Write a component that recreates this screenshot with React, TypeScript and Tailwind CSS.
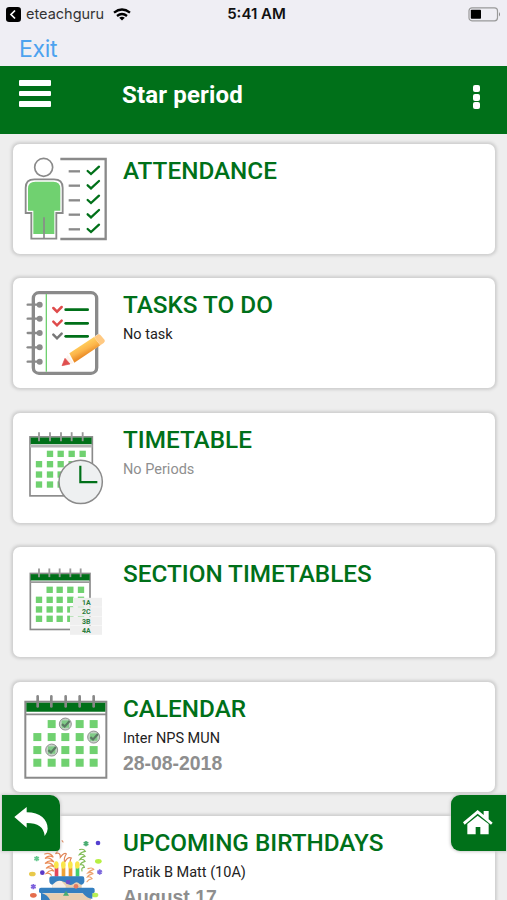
import React from "react";

const GREEN = "#007019";
const LIGHT = "#70d170";
const GREY = "#8a8a8a";

function AttendanceIcon() {
  return (
    <svg viewBox="9 12 330 330" className="size-[110px] shrink-0" fill="none">
      <path d="M151 57H287V297H151" stroke={GREY} strokeWidth="7" />
      <circle cx="101" cy="82" r="27" stroke={GREY} strokeWidth="5" fill="#fff" />
      <path d="M47 219V143Q47 118 73 118H132Q158 118 158 143V219H139V296H64V219Z" fill="#fff" stroke={GREY} strokeWidth="5.5" />
      <path d="M54 212V146Q54 125 76 125H130Q151 125 151 146V212H133V282H70V212Z" fill={LIGHT} />
      <path d="M102 232V296" stroke={GREY} strokeWidth="5" />
      {[94, 137, 181, 224, 268].map((y) => (
        <g key={y}>
          <path d={`M176 ${y}H210`} stroke={GREY} strokeWidth="7" />
          <path d={`M233 ${y - 1}L243 ${y + 8}L267 ${y - 14}`} stroke={GREEN} strokeWidth="7" strokeLinecap="round" />
        </g>
      ))}
    </svg>
  );
}

function TasksIcon() {
  return (
    <svg viewBox="9 10 330 330" className="size-[110px] shrink-0" fill="none">
      <defs>
        <linearGradient id="pencil" x1="225" y1="205" x2="240" y2="235" gradientUnits="userSpaceOnUse">
          <stop offset="0" stopColor="#ffcc5b" />
          <stop offset="0.5" stopColor="#fcb54a" />
          <stop offset="1" stopColor="#eb8d28" />
        </linearGradient>
      </defs>
      <rect x="70" y="54" width="190" height="242" rx="17" stroke={GREY} strokeWidth="10" fill="#fff" />
      <path d="M109 58V291" stroke={LIGHT} strokeWidth="4" />
      {[90, 132, 175, 218, 261].map((y) => (
        <g key={y}>
          <path d={`M53 ${y}H90`} stroke={GREY} strokeWidth="7" strokeLinecap="round" />
          <circle cx="89" cy={y} r="9" fill={GREY} />
        </g>
      ))}
      {[105, 146, 185].map((y, i) => (
        <g key={y} strokeLinecap="round">
          <path d={`M130 ${y - 5}L141 ${y + 6}L155 ${y - 8}`} stroke={i < 2 ? "#df4b4b" : "#777"} strokeWidth="7.5" />
          <path d={`M167 ${y}H233`} stroke={GREEN} strokeWidth="8" />
        </g>
      ))}
      <path d="M167 249L263 179L285 200L194 268L155 275Z" fill="#fff" />
      <path d="M173 241L191 266L155 273Z" fill="#fdf3ec" />
      <path d="M178 236L252 187L271 212L193 264Z" fill="url(#pencil)" />
      <path d="M252 187L263 180Q268 177 272 182L284 196Q286 200 281 205L271 212Z" fill="#ffc982" />
      <path d="M165 251L180 268L156 273Z" fill="#df4f4f" stroke="#df4f4f" strokeWidth="2" strokeLinejoin="round" />
    </svg>
  );
}

function TimetableIcon() {
  return (
    <svg viewBox="9 8.4 330 330" className="size-[110px] shrink-0" fill="none">
      <rect x="60" y="80" width="187" height="177" fill="#fff" stroke={GREY} strokeWidth="5" />
      <rect x="62" y="82" width="183" height="20" fill={GREEN} />
      <path d="M60 108H247" stroke="#b5b5b5" strokeWidth="8" />
      {[87, 120, 153, 185, 218].map((x) => (
        <path key={x} d={`M${x} 66V93`} stroke="#999" strokeWidth="5.5" />
      ))}
      {[131, 162, 193, 223].map((y, r) =>
        [87, 120, 152, 185, 218].map((x, c) =>
          r === 0 && c === 0 ? null : <rect key={`${x}-${y}`} x={x - 9.5} y={y - 9.5} width="19" height="19" fill={LIGHT} />
        )
      )}
      <circle cx="212" cy="215" r="65" fill="#eef0f1" stroke={GREY} strokeWidth="4.5" />
      <path d="M211 167V216H262" stroke={GREEN} strokeWidth="6.5" />
    </svg>
  );
}

function SectionIcon() {
  return (
    <svg viewBox="9 6.6 330 330" className="size-[110px] shrink-0" fill="none">
      <rect x="61" y="86" width="179" height="168" fill="#fff" stroke={GREY} strokeWidth="5" />
      <rect x="62" y="88" width="177" height="19" fill={GREEN} />
      <path d="M61 112H240" stroke="#9a9a9a" strokeWidth="5" />
      {[87, 118, 149, 181, 212].map((x) => (
        <path key={x} d={`M${x} 71V97`} stroke="#999" strokeWidth="5.5" />
      ))}
      {[135, 165, 194, 222].map((y, r) =>
        [87, 119, 149, 181, 213].map((x, c) =>
          r === 0 && c === 0 ? null : <rect key={`${x}-${y}`} x={x - 9.5} y={y - 9.5} width="19" height="19" fill={LIGHT} />
        )
      )}
      {["1A", "2C", "3B", "4A"].map((label, i) => (
        <g key={label}>
          <rect x={i === 0 ? 189 : 180} y={159 + i * 28} width={i === 0 ? 87 : 96} height="27" fill="#efefef" />
          <text x="229" y={181 + i * 28} textAnchor="middle" fontSize="21" fontWeight="700" fill="#2b7d3c" fontFamily="Roboto, sans-serif">
            {label}
          </text>
        </g>
      ))}
    </svg>
  );
}

function CalendarIcon() {
  const marked = ["0-2", "1-4", "2-1"];
  return (
    <svg viewBox="9 4.8 330 330" className="size-[110px] shrink-0" fill="none">
      <rect x="46" y="64" width="243" height="228" fill="#fff" stroke={GREY} strokeWidth="6" />
      <rect x="49" y="67" width="237" height="27" fill={GREEN} />
      <path d="M46 102H289" stroke={GREY} strokeWidth="5" />
      {[83, 124, 167, 209, 251].map((x) => (
        <path key={x} d={`M${x} 48V78`} stroke="#888" strokeWidth="8" strokeLinecap="round" />
      ))}
      {[131, 170, 209, 247].map((y, r) =>
        [82, 125, 166, 209, 251].map((x, c) => {
          if (r === 0 && c === 0) return null;
          return (
            <g key={`${x}-${y}`}>
              <rect x={x - 12} y={y - 12} width="24" height="24" fill={LIGHT} />
              {marked.includes(`${r}-${c}`) && (
                <>
                  <circle cx={x} cy={y} r="18" fill="#c3d3c5" stroke="#929292" strokeWidth="3" />
                  <rect x={x - 11} y={y - 11} width="22" height="22" fill="#7fcb86" />
                  <path d={`M${x - 10} ${y}L${x - 2} ${y + 7}L${x + 13} ${y - 9}`} stroke="#5b7a63" strokeWidth="6.5" />
                </>
              )}
            </g>
          );
        })
      )}
    </svg>
  );
}

function BirthdayIcon() {
  const dots: [number, number, string][] = [
    [258, 191, "#49ad72"], [294, 189, "#5440d0"], [110, 236, "#67c990"], [295, 244, "#b6ef42"],
    [97, 282, "#e8c94a"], [127, 278, "#5938c8"], [299, 276, "#7b67dc"], [100, 320, "#7d62dc"],
    [100, 346, "#e56e4d"], [285, 345, "#b7ef55"],
  ];
  const stars = [0, 2, 6, 7];
  return (
    <svg viewBox="39 108 330 330" className="size-[110px] shrink-0" fill="none">
      <g strokeWidth="3.5" strokeLinecap="round">
        <path d="M134 222Q150 216 160 232Q147 223 135 235Q149 230 162 246Q148 238 135 250Q151 244 163 261Q150 252 138 265Q151 259 162 274Q151 267 139 280Q149 277 154 286" stroke="#e98b55" />
        <path d="M186 182L189 186M171 199Q176 214 166 221Q181 215 181 232Q193 216 199 222Q190 235 194 247Q203 229 214 234Q207 244 214 251" stroke="#df8355" />
        <path d="M239 209Q251 205 256 214Q243 216 238 224Q250 220 255 229Q244 230 239 239Q250 235 255 244Q243 247 241 254Q251 252 253 262Q243 262 246 273" stroke="#83bd59" />
        <path d="M264 266Q277 261 281 268Q267 273 263 279Q275 274 279 281Q266 284 262 291Q271 288 276 296Q265 298 261 305" stroke="#eca06d" />
      </g>
      {dots.map(([x, y, color], i) =>
        stars.includes(i) ? (
          <path key={i} d={`M${x} ${y - 8}V${y + 8}M${x - 7} ${y - 4}L${x + 7} ${y + 4}M${x - 7} ${y + 4}L${x + 7} ${y - 4}`} stroke={color} strokeWidth="5" />
        ) : (
          <ellipse key={i} cx={x} cy={y} rx={i === 1 || i === 5 ? 7 : 10} ry="7" fill={color} />
        )
      )}
      {[[169, "#e4475a"], [190, "#efa336"], [211, "#ed9732"], [232, "#43ce6d"]].map(([x, color]) => (
        <g key={x}>
          <rect x={Number(x) - 5} y="262" width="11" height="28" fill={String(color)} />
          <ellipse cx={x} cy="255" rx="7" ry="11" fill="#f9e64c" />
        </g>
      ))}
      <path d="M157 298H245V325H157Z" fill="#e8ceb0" />
      <path d="M148 295Q148 289 155 289H247Q253 289 253 296V306Q248 319 239 312Q230 302 220 312Q209 320 201 309L184 303L162 314Q149 316 148 304Z" fill="#347fc0" />
      <path d="M157 315Q171 299 184 303L197 318V325H157Z" fill="#f7eee5" />
      <rect x="117" y="323" width="167" height="17" rx="6" fill="#347fc0" />
      <rect x="130" y="340" width="143" height="32" fill="#e8ceb0" />
      <path d="M123 338Q143 344 150 360H123Z" fill="#347fc0" />
      <path d="M248 339H277V356Q262 357 248 339Z" fill="#347fc0" />
      <circle cx="204" cy="306" r="7" fill="#6950c9" />
      <circle cx="228" cy="319" r="7" fill="#e47c62" />
      <path d="M198 332L207 347H189Z" fill="#48ac73" />
    </svg>
  );
}

type Item = {
  title: string;
  icon: React.ReactNode;
  note?: string;
  noteClass?: string;
  date?: string;
};

const items: Item[] = [
  { title: "ATTENDANCE", icon: <AttendanceIcon /> },
  { title: "TASKS TO DO", icon: <TasksIcon />, note: "No task", noteClass: "text-[#222]" },
  { title: "TIMETABLE", icon: <TimetableIcon />, note: "No Periods", noteClass: "text-[#8f8f8f]" },
  { title: "SECTION TIMETABLES", icon: <SectionIcon /> },
  { title: "CALENDAR", icon: <CalendarIcon />, note: "Inter NPS MUN", noteClass: "text-[#222]", date: "28-08-2018" },
  { title: "UPCOMING BIRTHDAYS", icon: <BirthdayIcon />, note: "Pratik B Matt (10A)", noteClass: "text-[#222]", date: "August 17" },
];

export default function App() {
  return (
    <div className="relative flex h-[900px] w-[507px] flex-col overflow-hidden bg-[#eeeeee] font-['Roboto',sans-serif]">
      <div className="h-[66px] shrink-0 bg-[#efeef4]">
        <div className="grid h-7 grid-cols-3 items-center px-[6px] font-['Inter',sans-serif] text-[14.5px] text-[#111]">
          <div className="flex items-center">
            <svg viewBox="0 0 15 15" className="size-[15px]" fill="none">
              <rect width="15" height="15" rx="3.2" fill="#000" />
              <path d="M9 3.5L5 7.5L9 11.5" stroke="#fff" strokeWidth="1.7" />
            </svg>
            <span className="ml-[5px] w-[78px] text-[#333]">eteachguru</span>
            <svg viewBox="0 0 18 13" className="ml-[9px] h-[13px] w-[18px]" fill="none" stroke="#000" strokeWidth="2.3">
              <path d="M1 4.7Q9-1.6 17 4.7M4 8Q9 4 14 8" />
              <path d="M9 12.5L6.2 9.8Q9 7.8 11.8 9.8Z" fill="#000" stroke="none" />
            </svg>
          </div>
          <div className="pl-[6px] text-center text-[15px] font-semibold">5:41 AM</div>
          <svg viewBox="0 0 33 15" className="h-[15px] w-[33px] justify-self-end" fill="none">
            <rect x="1" y="0.8" width="28.5" height="13" rx="3" stroke="#999" strokeWidth="1.2" />
            <rect x="2.8" y="2.8" width="10.2" height="9" rx="0.8" fill="#000" />
            <path d="M31 5Q33 7.3 31 9.6Z" fill="#888" />
          </svg>
        </div>
        <div className="pl-[19px] font-['Inter',sans-serif] text-[23px] leading-[42px] tracking-[-0.3px] text-[#4da2ef]">Exit</div>
      </div>

      <header className="flex h-[68px] shrink-0 items-start bg-[#007019] px-[19px] pt-[14px]">
        <div className="flex w-8 flex-col gap-[5px]">
          <span className="h-[5.5px] rounded-[1px] bg-white" />
          <span className="h-[5.5px] rounded-[1px] bg-white" />
          <span className="h-[5.5px] rounded-[1px] bg-white" />
        </div>
        <h1 className="ml-[71px] text-[24px] leading-[31px] font-bold tracking-[0.15px] text-white">Star period</h1>
        <div className="mt-[5px] mr-[8px] ml-auto flex flex-col gap-[1.5px]">
          <span className="size-[7px] rounded-[2px] bg-white" />
          <span className="size-[7px] rounded-[2px] bg-white" />
          <span className="size-[7px] rounded-[2px] bg-white" />
        </div>
      </header>

      <main className="flex flex-col gap-[24.4px] pt-[10px] pr-[12px] pl-[13px]">
        {items.map((item) => (
          <section key={item.title} className="flex h-[110px] shrink-0 rounded-[7px] bg-white shadow-[0_0_3px_1.5px_#cfcfcf]">
            {item.icon}
            <div className="pt-[11px] whitespace-nowrap">
              <h2 className="text-[24.3px] leading-8 font-medium text-[#007019]">{item.title}</h2>
              {item.note && <p className={`mt-[4px] text-[14.5px] leading-[20px] ${item.noteClass}`}>{item.note}</p>}
              {item.date && (
                <p className="mt-[3px] font-['Liberation_Sans',sans-serif] text-[19.4px] leading-[22px] font-bold text-[#8e8e8e]">{item.date}</p>
              )}
            </div>
          </section>
        ))}
      </main>

      <button className="absolute top-[795px] left-[2px] flex h-[56px] w-[58px] rounded-tr-[10px] rounded-br-[4px] bg-[#007019] shadow-[0_0_3px_1px_#cccccc]">
        <svg viewBox="6 45 174 168" className="h-[56px] w-[58px]" fill="#fff">
          <path d="M43 111L80 81V97C121 97 143 119 143 146Q143 157 134 168Q131 129 80 129V143Z" />
        </svg>
      </button>
      <button className="absolute top-[795px] left-[451px] flex h-[56px] w-[55px] rounded-l-[9px] bg-[#007019] shadow-[0_0_3px_1px_#cccccc]">
        <svg viewBox="213 75 165 168" className="h-[56px] w-[55px]" fill="#fff">
          <path d="M249 157L293 120L311 135V123H326V148L338 158L333 164L293 131L254 164Z" />
          <path d="M262 162L293 137L326 162V193H301V171H287V193H262Z" />
        </svg>
      </button>
    </div>
  );
}
